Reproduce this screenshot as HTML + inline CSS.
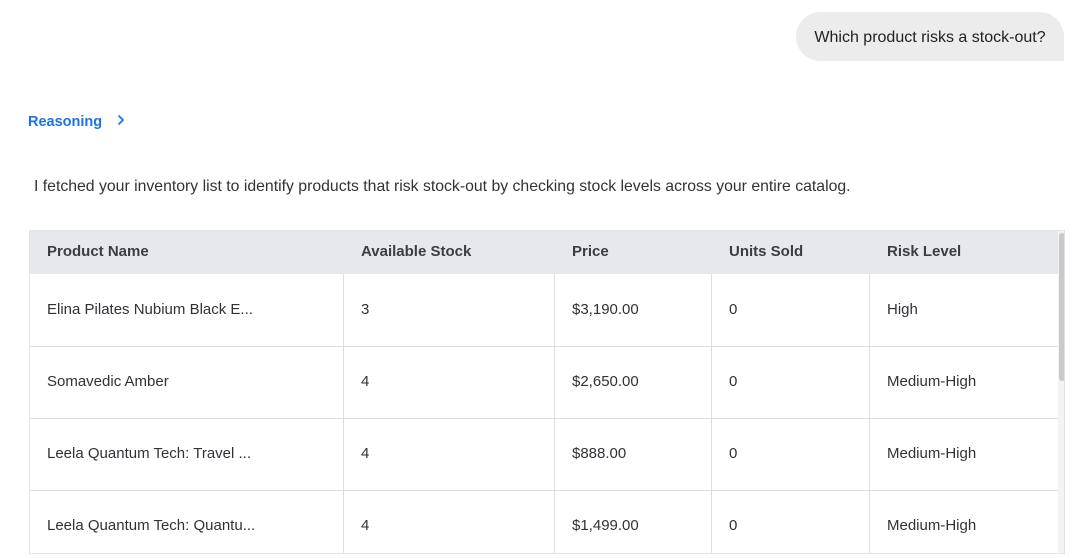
<html><head><style>
body{margin:0;width:1080px;height:558px;background:#fff;font-family:"Liberation Sans",Arial,sans-serif;color:#2f3237;position:relative;overflow:hidden}
.b{position:absolute;left:796px;top:12px;width:268px;height:49px;background:#ececec;border-radius:25px 25px 0 25px;font-size:16px;line-height:51px;text-align:center;color:#222}
.r{position:absolute;left:28px;top:114px;font-size:14.5px;font-weight:bold;color:#1a73e8}
.p{position:absolute;left:34px;top:178px;font-size:15.8px;color:#333}
.t{position:absolute;left:29px;top:230px;width:1036px;height:324px;border:1px solid #e2e4e8;box-sizing:border-box;overflow:hidden}
.h{position:absolute;left:0;top:0;width:1036px;height:43px;background:#e7e8eb}
.c{position:absolute;font-size:15px;white-space:nowrap}
.v{position:absolute;width:1px;background:#dedfe2;top:43px;height:300px}
.hl{position:absolute;left:0;width:1028px;height:1px;background:#dedfe2}
.sb{position:absolute;left:1028px;top:0;width:8px;height:330px;background:#f3f3f4}
.th{position:absolute;left:1029px;top:2px;width:6px;height:148px;background:#c9c9cc;border-radius:3px}
</style></head><body>
<div class="b">Which product risks a stock-out?</div>
<div class="r">Reasoning <span style="margin-left:10px;display:inline-block">
<svg width="10" height="12" viewBox="0 0 10 12"><path d="M3 2l4 4-4 4" fill="none" stroke="#1a73e8" stroke-width="1.8" stroke-linecap="round" stroke-linejoin="round"/></svg></span></div>
<div class="p">I fetched your inventory list to identify products that risk stock-out by checking stock levels across your entire catalog.</div>
<div class="t">
<div class="h"></div>
<div class="sb"></div><div class="th"></div>
<div class="v" style="left:313px"></div><div class="v" style="left:524px"></div><div class="v" style="left:681px"></div><div class="v" style="left:839px"></div>
<div class="hl" style="top:115px"></div><div class="hl" style="top:187px"></div><div class="hl" style="top:259px"></div>
<div class="c" style="left:17px;top:12px;font-weight:bold;color:#3a3d42">Product Name</div>
<div class="c" style="left:331px;top:12px;font-weight:bold;color:#3a3d42">Available Stock</div>
<div class="c" style="left:542px;top:12px;font-weight:bold;color:#3a3d42">Price</div>
<div class="c" style="left:699px;top:12px;font-weight:bold;color:#3a3d42">Units Sold</div>
<div class="c" style="left:857px;top:12px;font-weight:bold;color:#3a3d42">Risk Level</div>

<div class="c" style="left:17px;top:70px">Elina Pilates Nubium Black E...</div>
<div class="c" style="left:331px;top:70px">3</div>
<div class="c" style="left:542px;top:70px">$3,190.00</div>
<div class="c" style="left:699px;top:70px">0</div>
<div class="c" style="left:857px;top:70px">High</div>

<div class="c" style="left:17px;top:142px">Somavedic Amber</div>
<div class="c" style="left:331px;top:142px">4</div>
<div class="c" style="left:542px;top:142px">$2,650.00</div>
<div class="c" style="left:699px;top:142px">0</div>
<div class="c" style="left:857px;top:142px">Medium-High</div>

<div class="c" style="left:17px;top:214px">Leela Quantum Tech: Travel ...</div>
<div class="c" style="left:331px;top:214px">4</div>
<div class="c" style="left:542px;top:214px">$888.00</div>
<div class="c" style="left:699px;top:214px">0</div>
<div class="c" style="left:857px;top:214px">Medium-High</div>

<div class="c" style="left:17px;top:286px">Leela Quantum Tech: Quantu...</div>
<div class="c" style="left:331px;top:286px">4</div>
<div class="c" style="left:542px;top:286px">$1,499.00</div>
<div class="c" style="left:699px;top:286px">0</div>
<div class="c" style="left:857px;top:286px">Medium-High</div>
</div>
</body></html>
